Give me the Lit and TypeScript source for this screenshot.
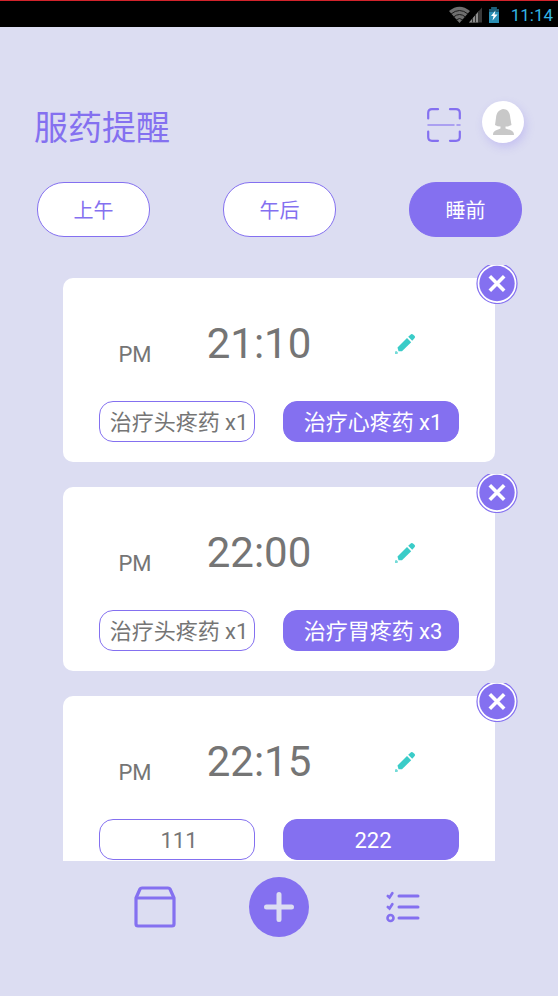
import { LitElement, html, css } from "lit";
import { customElement, property, state } from "lit/decorators.js";
import { classMap } from "lit/directives/class-map.js";

interface Reminder {
  period: string;
  time: string;
  first: string;
  second: string;
}

const buttonReset = css`
  * {
    box-sizing: border-box;
  }
  button {
    margin: 0;
    padding: 0;
    border: 0;
    background: none;
    font: inherit;
    color: inherit;
    cursor: pointer;
  }
  svg {
    display: block;
  }
`;

@customElement("status-bar")
class StatusBar extends LitElement {
  static styles = css`
    :host {
      display: flex;
      align-items: center;
      justify-content: flex-end;
      height: 27px;
      padding: 2px 5px 0 0;
      box-sizing: border-box;
      background: #000;
      border-top: 1px solid #d2232b;
      color: #33b5e5;
      font-size: 17px;
      line-height: 20px;
    }
    svg {
      display: block;
    }
    .battery {
      margin: 0 11px 0 5px;
    }
  `;

  render() {
    return html`
      <svg width="34" height="18" viewBox="0 0 34 18" aria-hidden="true">
        <path d="M0 5Q10.500 -3.500 21 5L10.500 17Z" fill="#6e6e6e" />
        <g fill="none" stroke="#1a1a1a" stroke-width="1">
          <path d="M2 8Q10.500 1 19 8" />
          <path d="M4.500 11Q10.500 6 16.500 11" />
          <path d="M7 14Q10.500 11 14 14" />
        </g>
        <path d="M20 16.500L33 1.500V16.500Z" fill="#3a3a3a" />
        <path d="M20 16.500L29 6V16.500Z" fill="#8c8c8c" />
        <path d="M23.500 12V16.500M26.500 9V16.500M29.500 5V16.500" stroke="#333" stroke-width="1" />
      </svg>
      <svg class="battery" width="12" height="17" viewBox="0 0 12 17" aria-hidden="true">
        <path d="M3.500 0H8.500V2H11V16H1V2H3.500Z" fill="#2a8fb5" />
        <path d="M3.500 0H8.500V2H11V5H1V2H3.500Z" fill="#1c5f7a" />
        <path d="M7.500 3.500L3 9H5.500L4.500 13.500L9.500 7.500H6.500Z" fill="#fff" />
      </svg>
      <time>11:14</time>
    `;
  }
}

@customElement("reminder-card")
class ReminderCard extends LitElement {
  @property({ attribute: false }) reminder!: Reminder;

  static styles = [
    buttonReset,
    css`
      :host {
        display: block;
        position: relative;
        padding: 40px 36px 20px;
        box-sizing: border-box;
        border-radius: 10px;
        background: #fff;
        color: #757575;
      }
      .close {
        position: absolute;
        top: -13px;
        right: -23px;
      }
      .when {
        display: grid;
        grid-template-columns: 72fr 176fr 112fr;
        justify-items: center;
        align-items: center;
        height: 50px;
        margin-bottom: 33px;
      }
      .period {
        padding-top: 22px;
        font-size: 22px;
        line-height: 26px;
      }
      .time {
        font-size: 42px;
        line-height: 52px;
      }
      .edit {
        margin-left: 4px;
      }
      .doses {
        display: grid;
        grid-template-columns: 156fr 176fr;
        gap: 28px;
      }
      .dose {
        height: 41px;
        padding: 2px 0 0 4px;
        border: 1px solid #8470f0;
        border-radius: 14px;
        font-size: 22px;
        line-height: 26px;
        white-space: nowrap;
      }
      .filled {
        background: #8470f0;
        color: #fff;
      }
    `,
  ];

  render() {
    const r = this.reminder;
    return html`
      <button class="close" aria-label="删除">
        <svg width="42" height="39" viewBox="0 2 42 39">
          <circle cx="21" cy="20.500" r="20" fill="#fff" stroke="#8470f0" stroke-width="1.200" />
          <circle cx="21" cy="20.500" r="17.700" fill="#8470f0" />
          <path d="M13.800 13.300L28.200 27.700M28.200 13.300L13.800 27.700" stroke="#fff" stroke-width="3.600" />
        </svg>
      </button>
      <div class="when">
        <span class="period">${r.period}</span>
        <time class="time">${r.time}</time>
        <button class="edit" aria-label="编辑">
          <svg width="22" height="22" viewBox="0 0 22 22" fill="#3accc8">
            <path d="M3.500 14.500L13 5L17.200 9.200L8 18.300H4.500Z" />
            <path d="M14.200 3.800L17 1.200Q18 .5 19 1.400L20.700 3.100Q21.500 4.100 20.700 5L18.200 7.800Z" />
            <path d="M1 21V18.500L2.500 18L4 19.500L3.500 21Z" opacity=".7" />
          </svg>
        </button>
      </div>
      <div class="doses">
        <button class="dose">${r.first}</button>
        <button class="dose filled">${r.second}</button>
      </div>
    `;
  }
}

@customElement("app-root")
class AppRoot extends LitElement {
  @state() private selected = "睡前";

  private tabs = ["上午", "午后", "睡前"];

  private reminders: Reminder[] = [
    { period: "PM", time: "21:10", first: "治疗头疼药 x1", second: "治疗心疼药 x1" },
    { period: "PM", time: "22:00", first: "治疗头疼药 x1", second: "治疗胃疼药 x3" },
    { period: "PM", time: "22:15", first: "111", second: "222" },
  ];

  static styles = [
    buttonReset,
    css`
      :host {
        display: flex;
        flex-direction: column;
        height: 100vh;
        background: #dcddf2;
        color: #8470f0;
        font-family: Roboto, "Noto Sans CJK SC", sans-serif;
      }
      status-bar,
      header,
      nav,
      footer {
        flex: none;
      }
      header {
        display: flex;
        align-items: flex-start;
        padding: 74px 34px 0;
      }
      h1 {
        flex: 1;
        margin: 6px 0 0;
        font-size: 34px;
        font-weight: 400;
        line-height: 42px;
      }
      .scan {
        margin: 7px 21px 0 0;
      }
      .avatar {
        width: 42px;
        height: 42px;
        border-radius: 50%;
        background: #fff;
        box-shadow: 2px 4px 8px rgba(132, 112, 240, 0.25);
      }
      nav {
        display: flex;
        justify-content: space-between;
        padding: 33px 36px 28px 37px;
      }
      .tab {
        width: 113px;
        height: 55px;
        padding-top: 2px;
        border: 1px solid #8470f0;
        border-radius: 27px;
        background: #fff;
        font-size: 20px;
        line-height: 24px;
      }
      .tab.active {
        background: #8470f0;
        color: #fff;
      }
      main {
        flex: 1;
        min-height: 0;
        display: flex;
        flex-direction: column;
        gap: 25px;
        padding: 13px 63px;
        overflow-y: auto;
        scrollbar-width: none;
      }
      reminder-card {
        flex: none;
      }
      footer {
        display: grid;
        grid-template-columns: repeat(3, 1fr);
        place-items: center;
        padding: 16px 93px 59px;
      }
    `,
  ];

  render() {
    return html`
      <status-bar></status-bar>
      <header>
        <h1>服药提醒</h1>
        <button class="scan" aria-label="扫码">
          <svg width="34" height="34" viewBox="0 0 34 34" fill="none" stroke="#8470f0" stroke-width="2.200" stroke-linecap="round">
            <path d="M1.200 10.500V5Q1.200 1.200 5 1.200H11" />
            <path d="M23 1.200H29Q32.800 1.200 32.800 5V10.500" />
            <path d="M1.200 23.500V29Q1.200 32.800 5 32.800H11" />
            <path d="M23 32.800H29Q32.800 32.800 32.800 29V23.500" />
            <path d="M1 17H27M30 17H33" stroke-width="1.500" opacity=".75" />
          </svg>
        </button>
        <button class="avatar" aria-label="我的">
          <svg width="42" height="42" viewBox="0 0 42 42" fill="#c8c8c8">
            <path
              d="M21 8C26 8 28 12 28.300 17L29.500 24Q26.500 25.500 23.500 25.500V27.500C27 29 32 29 32 34H11C11 29 15.500 29 18.500 27.500V25.500Q15.500 25.500 13 24L14 17C14.300 12 16.500 9 21 8Z"
            />
          </svg>
        </button>
      </header>
      <nav>
        ${this.tabs.map(
          (tab) => html`
            <button
              class=${classMap({ tab: true, active: tab === this.selected })}
              @click=${() => (this.selected = tab)}
            >${tab}</button>
          `
        )}
      </nav>
      <main>
        ${this.reminders.map((r) => html`<reminder-card .reminder=${r}></reminder-card>`)}
      </main>
      <footer>
        <button aria-label="药箱">
          <svg width="42" height="42" viewBox="0 0 42 42" fill="none" stroke="#8470f0" stroke-width="3.200" stroke-linejoin="round">
            <path d="M2 12L6 3Q6.500 2 8 2H34Q35.500 2 36 3L40 12V38Q40 40 38 40H4Q2 40 2 38Z" />
            <path d="M2 12H40" />
          </svg>
        </button>
        <button aria-label="添加">
          <svg width="60" height="60" viewBox="0 0 60 60">
            <circle cx="30" cy="30" r="30" fill="#8470f0" />
            <path d="M30 17.500V42.500M17.500 30H42.500" stroke="#dcddf2" stroke-width="5" stroke-linecap="round" />
          </svg>
        </button>
        <button aria-label="清单">
          <svg width="34" height="34" viewBox="0 0 34 34" fill="none" stroke="#8470f0" stroke-width="3" stroke-linecap="round">
            <path d="M13 6H32M13 17H32M13 28H32" />
            <path d="M1.800 6L3.500 7.500L6.300 3.200M1.800 17L3.500 18.500L6.300 14.200" stroke-width="2.600" />
            <circle cx="4.500" cy="28" r="3" stroke-width="2.600" />
          </svg>
        </button>
      </footer>
    `;
  }
}
